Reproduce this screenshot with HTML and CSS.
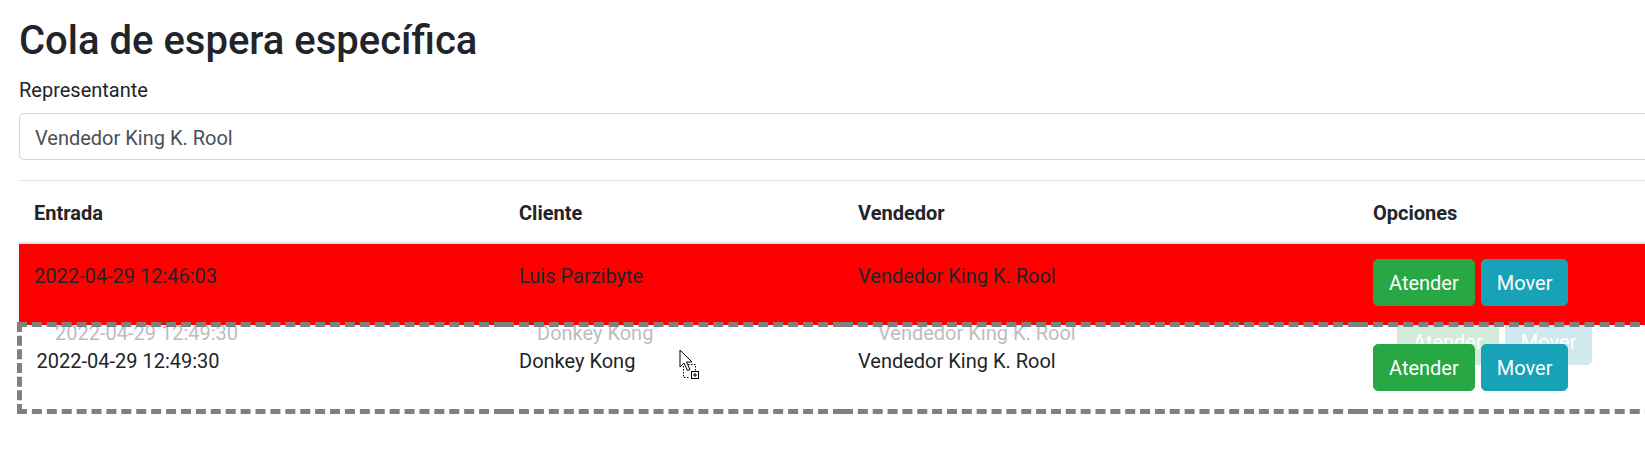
FILE: index.html
```html
<!DOCTYPE html>
<html lang="es">
<head>
<meta charset="utf-8">
<title>Cola de espera específica</title>
<link rel="stylesheet" href="styles.css">
</head>
<body>
<div class="page">
  <h2 class="title">Cola de espera específica</h2>
  <div class="form-group">
    <label class="label">Representante</label>
    <div class="select">Vendedor King K. Rool</div>
  </div>
  <div class="table-wrap">
    <div class="ghost" aria-hidden="true">
      <span class="g-text">2022-04-29 12:49:30</span>
      <span class="g-text">Donkey Kong</span>
      <span class="g-text">Vendedor King K. Rool</span>
      <span class="g-actions"><span class="g-btn g-success">Atender</span><span class="g-btn g-info">Mover</span></span>
    </div>
    <table class="queue">
      <colgroup>
        <col class="c1"><col class="c2"><col class="c3"><col class="c4">
      </colgroup>
      <thead>
        <tr><th>Entrada</th><th>Cliente</th><th>Vendedor</th><th>Opciones</th></tr>
      </thead>
      <tbody>
        <tr class="row-alert">
          <td>2022-04-29 12:46:03</td>
          <td>Luis Parzibyte</td>
          <td>Vendedor King K. Rool</td>
          <td class="opts"><div class="actions"><button class="btn btn-success">Atender</button><button class="btn btn-info">Mover</button></div></td>
        </tr>
        <tr class="row-drop">
          <td>2022-04-29 12:49:30</td>
          <td>Donkey Kong</td>
          <td>Vendedor King K. Rool</td>
          <td class="opts"><div class="actions"><button class="btn btn-success">Atender</button><button class="btn btn-info">Mover</button></div></td>
        </tr>
      </tbody>
    </table>
    <svg class="cursor" width="24" height="34" viewBox="0 0 24 34" aria-hidden="true">
      <path d="M1 1 L1 18 L5 14 L8.5 21.5 L11 20.5 L7.5 13 L13 13 Z" fill="#fff" stroke="#000" stroke-width="1" stroke-linejoin="miter"/>
      <path d="M4.5 17 V28.5 H11" fill="none" stroke="#000" stroke-width="1" stroke-dasharray="1.5 1.5"/>
      <path d="M9 15.5 H16.5 V22" fill="none" stroke="#000" stroke-width="1" stroke-dasharray="1.5 1.5"/>
      <rect x="12.5" y="22.5" width="7" height="7" fill="#fff" stroke="#000" stroke-width="1"/>
      <path d="M16 24 V28 M14 26 H18" stroke="#000" stroke-width="1"/>
    </svg>
  </div>
</div>
</body>
</html>
```

FILE: styles.css
```css
*, *::before, *::after { box-sizing: border-box; }

html, body { margin: 0; padding: 0; }

body {
  font-family: Roboto, "Liberation Sans", Arial, sans-serif;
  font-size: 20px;
  line-height: 1.5;
  color: #212529;
  background: #fff;
  overflow: hidden;
}

.page {
  width: 1840px;
  padding: 17px 19px 0 19px;
}

.title {
  font-size: 40px;
  font-weight: 500;
  line-height: 1.2;
  margin: 0 0 10px 0;
}

.form-group { margin-bottom: 20px; }

.label {
  display: block;
  margin-bottom: 8px;
}

.select {
  height: 47px;
  padding: 9px 15px 6px 15px;
  border: 1px solid #ced4da;
  border-radius: 5px;
  color: #495057;
  line-height: 30px;
}

.table-wrap { position: relative; }

.queue {
  position: relative;
  z-index: 1;
  width: calc(100% + 2.5px);
  margin-left: -2.5px;
  border-collapse: collapse;
  table-layout: fixed;
}

.c1 { width: 485px; }
.c2 { width: 339px; }
.c3 { width: 515px; }

.queue th,
.queue td {
  padding: 16.5px 15px 13.5px 15px;
  vertical-align: top;
  text-align: left;
  border-top: 1px solid #dee2e6;
  white-space: nowrap;
}

.queue thead th {
  vertical-align: bottom;
  padding-top: 17px;
  padding-bottom: 14px;
  border-bottom: 2px solid #dee2e6;
  font-weight: 700;
}

.queue td.opts { padding: 15px 15px 16px 15px; }

.row-alert td { background: #ff0000; }

.row-drop { border: 5px dashed #808080; }

.queue .row-drop td { padding-top: 18.5px; padding-bottom: 16px; }
.queue .row-drop td.opts { padding-top: 17px; padding-bottom: 17.5px; }

.actions {
  display: flex;
  gap: 6px;
}

.btn {
  font-family: inherit;
  font-size: 20px;
  line-height: 30px;
  padding: 7.5px 15px;
  border: 1px solid transparent;
  border-radius: 5px;
  color: #fff;
  cursor: pointer;
}

.btn-success { background: #28a745; border-color: #28a745; }
.btn-info { background: #17a2b8; border-color: #17a2b8; }

/* drag image left behind the dropped row */
.ghost {
  position: absolute;
  z-index: 0;
  left: 36px;
  top: 138px;
  display: grid;
  grid-template-columns: 482px 341px 519px auto;
  align-items: start;
  white-space: nowrap;
}

.g-text { color: #bdbdbd; line-height: 30px; }

.g-actions { display: flex; gap: 6px; }

.g-btn {
  display: block;
  line-height: 30px;
  padding: 8.5px 16px;
  border-radius: 5px;
  color: #fff;
}

.g-success { background: #d3ebdb; }
.g-info { background: #d0e9ef; }

.cursor {
  position: absolute;
  z-index: 2;
  left: 660px;
  top: 169px;
}
```
